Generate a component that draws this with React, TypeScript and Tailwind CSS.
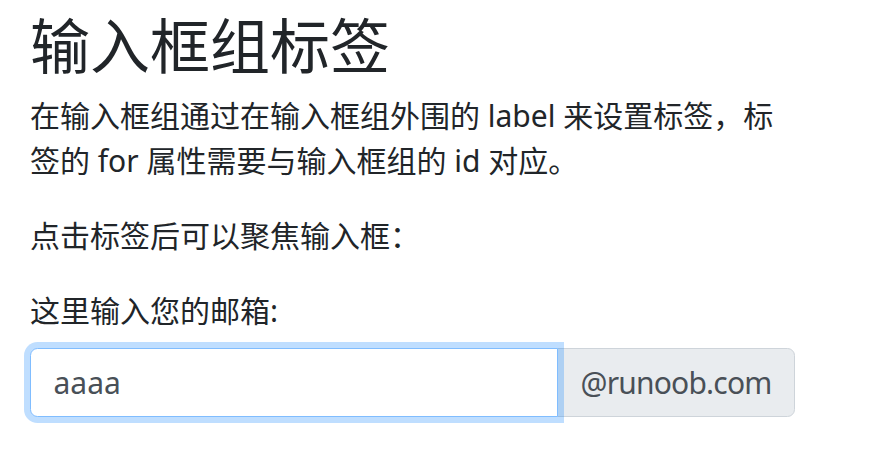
import React from "react";

export default function App() {
  return (
    <div
      className="w-[887px] h-[464px] bg-white text-[#212529] pl-[30px] pt-[10px]"
      style={{ fontFamily: "'Noto Sans', 'Noto Sans CJK SC', sans-serif" }}
    >
      <h1 className="text-[60px] leading-[72px] font-normal mb-[11px]">输入框组标签</h1>
      <p className="text-[30px] leading-[45px] mb-[30px] w-[765px]">
        在输入框组通过在输入框组外围的 label 来设置标签，标签的 for 属性需要与输入框组的 id 对应。
      </p>
      <p className="text-[30px] leading-[45px] mb-[30px]">点击标签后可以聚焦输入框：</p>
      <label htmlFor="email" className="block text-[30px] leading-[45px] mb-[15px]">
        这里输入您的邮箱:
      </label>
      <div className="flex w-[765px] h-[69px] text-[30px]">
        <input
          id="email"
          defaultValue="aaaa"
          className="relative z-10 flex-1 min-w-0 h-full border border-[#80bdff] rounded-l-[7.5px] px-[22.5px] text-[#495057] bg-white outline-none shadow-[0_0_0_6px_rgba(0,123,255,0.25)]"
        />
        <div className="-ml-px flex items-center px-[22.5px] bg-[#e9ecef] border border-[#ced4da] rounded-r-[7.5px] text-[#495057] leading-[45px] tracking-[-0.8px]">
          @runoob.com
        </div>
      </div>
    </div>
  );
}
